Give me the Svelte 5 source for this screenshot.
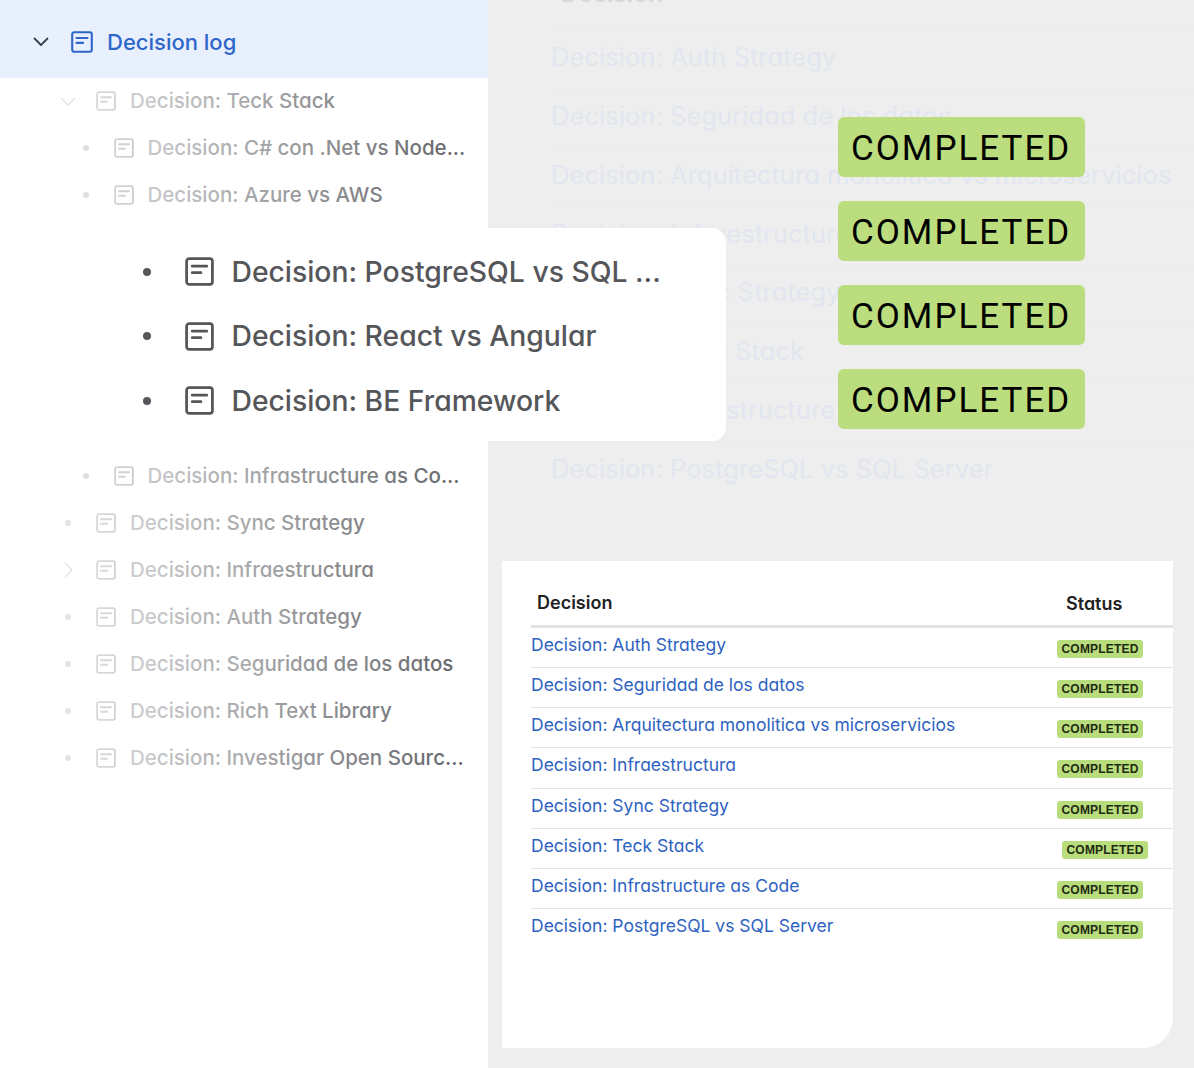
<script>
  const topRows = [
    { label: 'Decision: Teck Stack', level: 1, mark: 'down' },
    { label: 'Decision: C# con .Net vs Node...', level: 2, mark: 'dot' },
    { label: 'Decision: Azure vs AWS', level: 2, mark: 'dot' }
  ];
  const bottomRows = [
    { label: 'Decision: Infrastructure as Co...', level: 2, mark: 'dot' },
    { label: 'Decision: Sync Strategy', level: 1, mark: 'dot' },
    { label: 'Decision: Infraestructura', level: 1, mark: 'right' },
    { label: 'Decision: Auth Strategy', level: 1, mark: 'dot' },
    { label: 'Decision: Seguridad de los datos', level: 1, mark: 'dot' },
    { label: 'Decision: Rich Text Library', level: 1, mark: 'dot' },
    { label: 'Decision: Investigar Open Sourc...', level: 1, mark: 'dot' }
  ];
  const popupRows = ['Decision: PostgreSQL vs SQL ...', 'Decision: React vs Angular', 'Decision: BE Framework'];
  const decisions = [
    'Decision: Auth Strategy',
    'Decision: Seguridad de los datos',
    'Decision: Arquitectura monolitica vs microservicios',
    'Decision: Infraestructura',
    'Decision: Sync Strategy',
    'Decision: Teck Stack',
    'Decision: Infrastructure as Code',
    'Decision: PostgreSQL vs SQL Server'
  ];
</script>

{#snippet doc(cls)}
  <svg class={cls} viewBox="0 0 20 20" fill="none" stroke="currentColor" stroke-width="1.9" stroke-linecap="round" aria-hidden="true">
    <rect x="1.1" y="1.1" width="17.8" height="17.8" rx="1.8" />
    <path d="M5 6.300h10M5 10.800h6" />
  </svg>
{/snippet}

{#snippet treeRow(row)}
  <li class="row" class:l2={row.level === 2}>
    <span class="mark">
      {#if row.mark === 'dot'}
        <span class="dot"></span>
      {:else if row.mark === 'down'}
        <svg class="chev" viewBox="0 0 16 16" fill="none" stroke="currentColor" stroke-width="1.3"><path d="M1 5l7 7 7-7" /></svg>
      {:else}
        <svg class="chev" viewBox="0 0 16 16" fill="none" stroke="currentColor" stroke-width="1.3"><path d="M5 1l7 7-7 7" /></svg>
      {/if}
    </span>
    {@render doc('ic')}
    <span class="label">{row.label}</span>
  </li>
{/snippet}

<div class="page">
  <aside class="side">
    <header class="head">
      <svg class="head-chev" viewBox="0 0 16 16" fill="none" stroke="currentColor" stroke-width="1.8" stroke-linecap="round" stroke-linejoin="round"><path d="M1.500 4.500L8 11l6.500-6.500" /></svg>
      {@render doc('head-ic')}
      <span>Decision log</span>
    </header>
    <div class="tree">
      <ul>
        {#each topRows as row}{@render treeRow(row)}{/each}
      </ul>
      <div class="hidden-gap"></div>
      <ul>
        {#each bottomRows as row}{@render treeRow(row)}{/each}
      </ul>
      <div class="fade"></div>
    </div>
  </aside>

  <main class="main">
    <div class="ghost">
      <div class="ghost-head"><span>Decision</span></div>
      {#each decisions as d}
        <div class="ghost-row">{d}</div>
      {/each}
    </div>

    <section class="card">
      <div class="card-head">
        <span class="h1">Decision</span>
        <span class="h2">Status</span>
      </div>
      {#each decisions as d, i}
        <div class="card-row">
          <a href="#top" class="link">{d}</a>
          <span class="chip" class:shift={i === 5}>COMPLETED</span>
        </div>
      {/each}
    </section>

    <div class="big-badges">
      {#each [0, 1, 2, 3] as b (b)}
        <div class="big">COMPLETED</div>
      {/each}
    </div>
  </main>

  <div class="popup">
    {#each popupRows as p}
      <div class="pop-row">
        <span class="pop-dot"></span>
        {@render doc('pop-ic')}
        <span>{p}</span>
      </div>
    {/each}
  </div>
</div>

<style>
  :global(body) { margin: 0; background: #fff; }
  .page {
    position: relative;
    width: 1194px;
    height: 1068px;
    overflow: hidden;
    display: grid;
    grid-template-columns: 488px 1fr;
    background: #eeeeee;
    font-family: Inter, "Liberation Sans", sans-serif;
    font-feature-settings: "cv11";
  }
  .side { background: #fff; }
  .head {
    height: 78px;
    background: #e8f0fd;
    display: flex;
    align-items: center;
    color: #2e66c9;
    font-size: 22px;
    font-weight: 500;
    padding-top: 6px;
    box-sizing: border-box;
    padding-left: 33px;
  }
  .head-chev { width: 16px; height: 16px; color: #3a4250; margin-right: 22px; }
  .head-ic { width: 22px; height: 22px; margin-right: 14px; }
  .tree { position: relative; }
  ul { list-style: none; margin: 0; padding: 0; }
  .row {
    height: 47px;
    box-sizing: border-box;
    padding-bottom: 2px;
    display: flex;
    align-items: center;
    padding-left: 60px;
    color: #55565a;
    font-size: 20.500px;
    font-weight: 500;
    white-space: nowrap;
  }
  .row.l2 { padding-left: 77.500px; }
  .mark {
    width: 16px;
    height: 16px;
    margin-right: 20px;
    display: flex;
    align-items: center;
    justify-content: center;
  }
  .dot { width: 6px; height: 6px; border-radius: 50%; background: #55565a; }
  .chev { width: 16px; height: 16px; }
  .ic { width: 20px; height: 20px; margin-right: 14px; flex: none; }
  .label { display: block; }
  .hidden-gap { height: 234px; }
  .fade {
    position: absolute;
    inset: 0;
    background: linear-gradient(90deg, rgba(255, 255, 255, 0.85) 60px, rgba(255, 255, 255, 0.05) 480px);
    pointer-events: none;
  }

  .main { position: relative; padding-left: 14px; min-width: 0; }
  .ghost {
    margin-top: -29px;
    padding-left: 49px;
    color: #e1e6ef;
    font-size: 25.600px;
    white-space: nowrap;
  }
  .ghost-head {
    height: 58px;
    border-bottom: 1px solid #ebebeb;
    color: #d8d8d8;
    font-weight: 700;
    padding-left: 10px;
    font-size: 24px;
    line-height: 46px;
  }
  .ghost-row {
    height: 57.850px;
    line-height: 53px;
    border-bottom: 1px solid #ebebeb;
  }
  .ghost-row:last-child { border-bottom: 0; }
  .card {
    margin-top: 61px;
    width: 671px;
    height: 487px;
    box-sizing: border-box;
    padding-left: 29px;
    background: #fff;
    border-bottom-right-radius: 30px;
  }
  .card-head {
    height: 66.900px;
    box-sizing: border-box;
    border-bottom: 3px solid #e2e2e2;
    display: grid;
    grid-template-columns: 529px 1fr;
    padding-left: 6px;
    padding-top: 30px;
    color: #222;
    font-size: 18px;
    font-weight: 600;
    line-height: 24px;
  }
  .h2 { margin-top: 1px; }
  .card-row {
    height: 40.250px;
    box-sizing: border-box;
    border-bottom: 1px solid #e2e2e2;
    display: grid;
    grid-template-columns: 526px 1fr;
    align-items: start;
  }
  .card-row:last-child { border-bottom: 0; }
  .link {
    color: #2e62c2;
    text-decoration: none;
    font-size: 17.500px;
    line-height: 24px;
    margin-top: 5px;
    white-space: nowrap;
  }
  .chip {
    justify-self: start;
    margin-top: 12px;
    height: 18px;
    line-height: 18px;
    padding: 0 4.500px;
    border-radius: 3px;
    background: #b9dc7c;
    color: #1d2b12;
    font-family: "Liberation Sans", sans-serif;
    font-size: 12px;
    letter-spacing: 0.2px;
    font-weight: 700;
  }
  .chip.shift { margin-left: 5px; }

  .big-badges {
    position: absolute;
    left: 350px;
    top: 117px;
    display: flex;
    flex-direction: column;
    gap: 24px;
  }
  .big {
    width: 247px;
    height: 60px;
    box-sizing: border-box;
    padding-left: 13px;
    background: #bcdd7e;
    border-radius: 6px;
    color: #000;
    font-family: Roboto, "Liberation Sans", sans-serif;
    font-size: 35px;
    letter-spacing: 2px;
    line-height: 64px;
    white-space: nowrap;
  }

  .popup {
    position: absolute;
    left: 120px;
    top: 228px;
    width: 606px;
    height: 213px;
    box-sizing: border-box;
    padding-top: 11.500px;
    background: #fff;
    border-radius: 0 14px 14px 0;
    color: #55565a;
    font-size: 28.300px;
    font-weight: 500;
  }
  .pop-row {
    height: 64.500px;
    display: flex;
    align-items: center;
    padding-left: 23px;
    white-space: nowrap;
  }
  .pop-dot { width: 8px; height: 8px; border-radius: 50%; background: #55565a; margin-right: 35px; }
  .pop-ic { width: 29px; height: 29px; margin-right: 18px; flex: none; margin-left: -1.500px; }
</style>
